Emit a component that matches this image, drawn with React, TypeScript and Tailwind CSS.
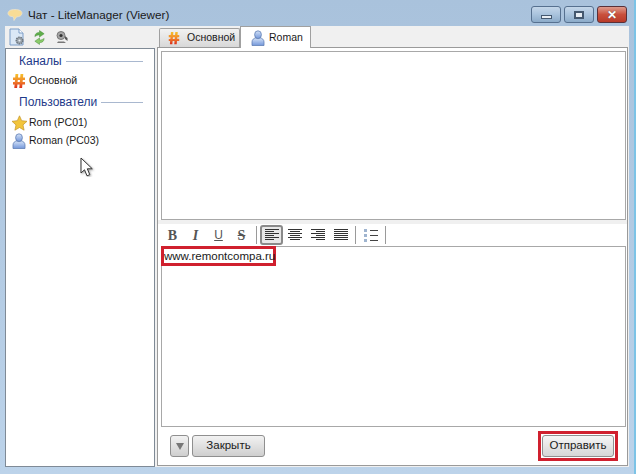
import React from "react";

const Hash = ({ s = 16, id }: { s?: number; id: string }) => (
  <svg width={s} height={s} viewBox="0 0 16 16" className="shrink-0">
    <defs>
      <linearGradient id={id} x1="0" y1="0" x2="0" y2="1">
        <stop offset="0" stopColor="#f6c22c" />
        <stop offset="0.55" stopColor="#f0802a" />
        <stop offset="1" stopColor="#dd2f1c" />
      </linearGradient>
    </defs>
    <path d="M4.500 1h2.800l-.3 3.500h2.200l.3-3.500h2.800l-.3 3.500H14v2.600h-2.200l-.2 1.800H14v2.600h-2.600l-.3 3.500H8.300l.3-3.500H6.400l-.3 3.500H3.300l.3-3.500H2V9h1.800l.2-1.900H2V4.500h2.200z M6.800 7.100l-.2 1.900h2.200l.2-1.900z" fill={`url(#${id})`} fillRule="evenodd" />
  </svg>
);

const Person = ({ s = 16, id }: { s?: number; id: string }) => (
  <svg width={s} height={s} viewBox="0 0 16 16" className="shrink-0">
    <defs>
      <linearGradient id={id} x1="0" y1="0" x2="0" y2="1">
        <stop offset="0" stopColor="#d4e2f7" />
        <stop offset="1" stopColor="#7397da" />
      </linearGradient>
    </defs>
    <ellipse cx="8" cy="4.700" rx="3.400" ry="3.900" fill={`url(#${id})`} stroke="#5f7fb5" strokeWidth="0.800" />
    <path d="M2 15.500v-3.500c0-2.500 2-3.800 3.500-4 .8.800 4.200.8 5 0 1.500.2 3.500 1.500 3.500 4v3.500z" fill={`url(#${id})`} stroke="#5f7fb5" strokeWidth="0.800" />
  </svg>
);

const Star = () => (
  <svg width="17" height="16" viewBox="0 0 16 16" className="shrink-0">
    <path d="M8 .8l2.200 4.900 5.300.6-4 3.600 1.100 5.300L8 12.500l-4.600 2.700 1.100-5.300-4-3.600 5.300-.6z" fill="#f2c53c" stroke="#c4952a" strokeWidth="0.700" />
  </svg>
);

const Bubble = () => (
  <svg width="16" height="16" viewBox="0 0 16 16" className="shrink-0">
    <path d="M1 6.500C1 4 3.500 2.500 8 2.500c4.200 0 7 1.400 7 3.700 0 2.300-2.500 3.600-5.500 3.700-.8 1-1.700 2.600-2.500 3.600-.2-1.500-.4-2.600-.8-3.700C3 9.500 1 8.500 1 6.500z" fill="#f8dc96" stroke="#e8e2d0" strokeWidth="0.800" />
  </svg>
);

const DocGear = () => (
  <svg width="16" height="18" viewBox="0 0 16 18" className="shrink-0">
    <path d="M1 1h9l4 4v12H1z" fill="#dbe8f6" stroke="#7a9cc6" />
    <path d="M10 1v4h4" fill="#fff" stroke="#7a9cc6" />
    <circle cx="10.500" cy="12.500" r="3.300" fill="#9aa3ab" stroke="#6c757d" strokeWidth="1.400" strokeDasharray="1.500 .8" />
    <circle cx="10.500" cy="12.500" r="1.100" fill="#eef2f6" />
  </svg>
);

const Refresh = () => (
  <svg width="13" height="15" viewBox="0 0 14 16" className="shrink-0">
    <path d="M2 7c0-3 2-4.500 5-4.500V.5l5 3.500-5 3.500V5.300C5 5.300 3.800 5.800 2 7z" fill="#5fae4a" stroke="#3f8a35" strokeWidth="0.500" />
    <path d="M12 9c0 3-2 4.500-5 4.500v2l-5-3.500 5-3.500v2.200c2 0 3.200-.5 5-1.700z" fill="#8ccb6a" stroke="#3f8a35" strokeWidth="0.500" />
  </svg>
);

const Cam = () => (
  <svg width="12" height="14" viewBox="0 0 12 14" className="shrink-0">
    <circle cx="5" cy="5.500" r="4" fill="#a5a5a5" stroke="#777" />
    <circle cx="5" cy="5.500" r="1.600" fill="#333" />
    <path d="M2 11.500h6l2 1.500H1z" fill="#777" />
    <path d="M9 6l2.500 2v3L9 9z" fill="#555" />
  </svg>
);

const Cursor = () => (
  <svg width="16" height="20" viewBox="0 0 16 20">
    <path d="M1 1v15l3.500-3.200 2.500 6 2.800-1.100-2.500-5.900h5z" fill="#fff" stroke="#333" strokeWidth="1" style={{ filter: "drop-shadow(1px 1px 1px rgba(0,0,0,.35))" }} />
  </svg>
);

const Lines = ({ rows }: { rows: [number, number][] }) => (
  <svg width="16" height="14" viewBox="0 0 16 14">
    {rows.map(([x, w], i) => (
      <path key={i} d={`M${x} ${1.5 + i * 2}h${w}`} stroke="#333" strokeWidth="1" />
    ))}
  </svg>
);

const Heading = ({ children }: { children: string }) => (
  <div className="flex items-center gap-[4px] pl-[13px] pr-[11px] text-[12px] text-[#1e3a8a] h-[16px]">
    <span>{children}</span>
    <span className="flex-1 h-px bg-[#a9b8cf]" />
  </div>
);

const Row = ({ icon, label }: { icon: React.ReactNode; label: string }) => (
  <div className="flex items-center h-[18px] text-[10.500px] text-[#1a1a1a] pl-[5px] gap-[2px]">
    <span className="w-[16px] flex justify-center">{icon}</span>
    <span>{label}</span>
  </div>
);

const FmtBtn = ({ children, active }: { children: React.ReactNode; active?: boolean }) => (
  <div className={`w-[23px] h-[20px] flex items-center justify-center ${active ? "border-2 border-[#8a8a8a] rounded-[3px] bg-[#e8e8e8]" : ""}`}>
    {children}
  </div>
);

const Sep = () => <span className="w-px h-[18px] bg-[#9a9a9a] mx-[3px]" />;

const WinBtn = ({ red, children }: { red?: boolean; children: React.ReactNode }) => (
  <div className={`w-[30px] h-[17px] rounded-[3px] border flex items-center justify-center ${red ? "bg-gradient-to-b from-[#dd9a8c] via-[#c9503c] to-[#b83a28] border-[#5a3038]" : "bg-gradient-to-b from-[#c4d6e9] via-[#a9c3dd] to-[#8cabc9] border-[#56708f]"}`}>
    {children}
  </div>
);

export default function App() {
  return (
    <div className="relative w-[636px] h-[474px] overflow-hidden flex flex-col border-r-2 border-[#7cc3e6] bg-gradient-to-b from-[#a9c2dc] to-[#bcd3ea] font-['Liberation_Sans',sans-serif]">
      <div className="h-[26px] shrink-0 flex pl-[7px] pr-[7px]">
        <div className="flex items-center pt-[4px]">
          <Bubble />
          <span className="ml-[5px] text-[11.700px] text-[#1a1a1a]">Чат - LiteManager (Viewer)</span>
        </div>
        <div className="ml-auto flex gap-[3px] pt-[6px]">
          <WinBtn><span className="w-[11px] h-[4px] mt-[4px] bg-[#e8eef4] border border-[#44586f]" /></WinBtn>
          <WinBtn><span className="w-[10px] h-[8px] bg-[#e8eef4] border-2 border-[#44586f]" /></WinBtn>
          <WinBtn red><span className="text-white font-bold text-[12px] leading-none [text-shadow:0_0_1px_#444]">✕</span></WinBtn>
        </div>
      </div>

      <div className="flex-1 ml-[5px] mr-[5px] mb-[7px] bg-[#f0f0f0] flex min-h-0">
        <div className="w-[150px] shrink-0 flex flex-col">
          <div className="h-[22px] shrink-0 flex items-center pl-[4px]">
            <DocGear />
            <span className="ml-[8px]"><Refresh /></span>
            <span className="ml-[10px]"><Cam /></span>
          </div>
          <div className="flex-1 bg-white border border-[#7f8a96] pt-[4px]">
            <Heading>Каналы</Heading>
            <div className="mt-[3px]"><Row icon={<Hash id="h1" />} label="Основной" /></div>
            <div className="mt-[4px]"><Heading>Пользователи</Heading></div>
            <div className="mt-[4px]">
              <Row icon={<Star />} label="Rom (PC01)" />
              <Row icon={<Person id="p1" />} label="Roman (PC03)" />
            </div>
          </div>
        </div>

        <div className="flex-1 min-w-0 ml-[2px] mr-[1px] mb-px flex flex-col">
          <div className="h-[21px] shrink-0 flex items-end relative z-10">
            <div className="h-[19px] w-[81px] ml-[2px] flex items-center pl-[7px] border border-b-0 border-[#a0a0a0] rounded-t-[2px] bg-gradient-to-b from-[#f2f2f2] to-[#d8d8d8] text-[10.500px] text-[#1a1a1a]">
              <Hash s={14} id="h2" />
              <span className="ml-[6px]">Основной</span>
            </div>
            <div className="h-[22px] w-[71px] -mb-px flex items-center pl-[9px] border border-b-0 border-[#a0a0a0] bg-white text-[10.500px] text-[#1a1a1a]">
              <Person s={16} id="p2" />
              <span className="ml-[3px]">Roman</span>
            </div>
          </div>
          <div className="flex-1 min-h-0 border border-[#9a9a9a] bg-white flex flex-col pt-[3px] pl-[3px] pr-px">
            <div className="h-[169px] shrink-0 border border-[#a8a8a8] bg-white" />
            <div className="h-[4px] shrink-0 bg-[#f0f0f0] -ml-[3px] -mr-px" />
            <div className="h-[22px] shrink-0 flex items-center text-[#555]">
              <FmtBtn><span className="font-['Liberation_Serif',serif] font-bold text-[14px]">B</span></FmtBtn>
              <FmtBtn><span className="font-['Liberation_Serif',serif] italic font-bold text-[14px]">I</span></FmtBtn>
              <FmtBtn><span className="underline text-[12px]">U</span></FmtBtn>
              <FmtBtn><span className="font-['Liberation_Serif',serif] font-bold line-through text-[14px]">S</span></FmtBtn>
              <Sep />
              <FmtBtn active><Lines rows={[[1, 14], [1, 9], [1, 14], [1, 9], [1, 14], [1, 9]]} /></FmtBtn>
              <FmtBtn><Lines rows={[[1, 14], [3, 10], [1, 14], [3, 10], [1, 14], [3, 10]]} /></FmtBtn>
              <FmtBtn><Lines rows={[[1, 14], [6, 9], [1, 14], [6, 9], [1, 14], [6, 9]]} /></FmtBtn>
              <FmtBtn><Lines rows={[[1, 14], [1, 14], [1, 14], [1, 14], [1, 14], [1, 14]]} /></FmtBtn>
              <Sep />
              <FmtBtn>
                <svg width="14" height="15" viewBox="0 0 14 15">
                  <rect x="0" y="1" width="3" height="3" fill="#9fb4cf" />
                  <rect x="0" y="6" width="3" height="3" fill="#9fb4cf" />
                  <rect x="0" y="11" width="3" height="3" fill="#9fb4cf" />
                  <path d="M6 2.500h8M6 7.500h8M6 12.500h8" stroke="#444" />
                </svg>
              </FmtBtn>
              <Sep />
            </div>
            <div className="h-[181px] shrink-0 border border-[#a8a8a8] bg-white">
              <div className="w-[115px] h-[20px] -mt-px -ml-px border-[3px] border-[#d0202e] flex items-center pt-px text-[11.500px] text-[#1a1a1a] whitespace-nowrap">
                www.remontcompa.ru<span className="w-px h-[13px] bg-black" />
              </div>
            </div>
            <div className="flex-1 min-h-0 flex items-center pl-[9px] pr-[8px]">
              <div className="w-[19px] h-[22px] rounded-[3px] border border-[#8f8f8f] bg-gradient-to-b from-[#f2f2f2] to-[#cfcfcf] flex items-center justify-center">
                <span className="w-0 h-0 border-x-[4px] border-x-transparent border-t-[7px] border-t-[#777]" />
              </div>
              <div className="ml-[3px] w-[73px] h-[22px] rounded-[3px] border border-[#8f8f8f] bg-gradient-to-b from-[#f2f2f2] to-[#cfcfcf] flex items-center justify-center text-[11.500px] text-[#1a1a1a]">Закрыть</div>
              <div className="ml-auto border-[3px] border-[#d0202e] h-[30px] w-[80px] flex items-center justify-center">
                <div className="w-[72px] h-[22px] rounded-[3px] border border-[#8f8f8f] bg-gradient-to-b from-[#f6f6f6] to-[#d6d6d6] flex items-center justify-center text-[11.500px] text-[#1a1a1a]">Отправить</div>
              </div>
            </div>
          </div>
        </div>
      </div>

      <div className="absolute left-[80px] top-[157px]"><Cursor /></div>
    </div>
  );
}
